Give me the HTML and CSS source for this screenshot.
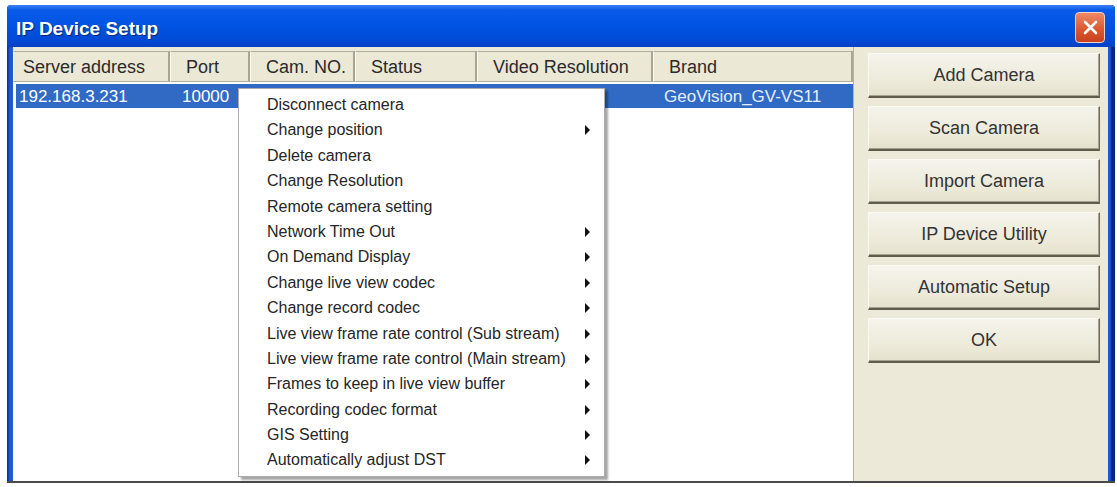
FILE: index.html
```html
<!DOCTYPE html>
<html lang="en">
<head>
    <meta charset="UTF-8">
    <title>IP Device Setup</title>
    <link rel="stylesheet" href="styles.css">
</head>
<body>
    <div class="window">
        <div class="titlebar">
            <span class="title">IP Device Setup</span>
            <div class="close">
                <svg width="17" height="17" viewBox="0 0 17 17">
                    <path d="M3 3 L14 14 M14 3 L3 14" stroke="#fff" stroke-width="2.6" stroke-linecap="round"/>
                </svg>
            </div>
        </div>

        <div class="client">
            <div class="list">
                <div class="header">
                    <div class="col c-addr">Server address</div>
                    <div class="col c-port">Port</div>
                    <div class="col c-cam">Cam. NO.</div>
                    <div class="col c-status">Status</div>
                    <div class="col c-res">Video Resolution</div>
                    <div class="col c-brand">Brand</div>
                </div>
                <div class="row selected">
                    <div class="cell c-addr">192.168.3.231</div>
                    <div class="cell c-port">10000</div>
                    <div class="cell c-cam"></div>
                    <div class="cell c-status"></div>
                    <div class="cell c-res"></div>
                    <div class="cell c-brand">GeoVision_GV-VS11</div>
                </div>

                <!-- right-click menu on the camera row -->
                <ul class="menu">
                    <li>Disconnect camera</li>
                    <li class="sub">Change position</li>
                    <li>Delete camera</li>
                    <li>Change Resolution</li>
                    <li>Remote camera setting</li>
                    <li class="sub">Network Time Out</li>
                    <li class="sub">On Demand Display</li>
                    <li class="sub">Change live view codec</li>
                    <li class="sub">Change record codec</li>
                    <li class="sub">Live view frame rate control (Sub stream)</li>
                    <li class="sub">Live view frame rate control (Main stream)</li>
                    <li class="sub">Frames to keep in live view buffer</li>
                    <li class="sub">Recording codec format</li>
                    <li class="sub">GIS Setting</li>
                    <li class="sub">Automatically adjust DST</li>
                </ul>
            </div>

            <div class="side">
                <button class="btn">Add Camera</button>
                <button class="btn">Scan Camera</button>
                <button class="btn">Import Camera</button>
                <button class="btn">IP Device Utility</button>
                <button class="btn">Automatic Setup</button>
                <button class="btn">OK</button>
            </div>
        </div>
    </div>
</body>
</html>
```

FILE: styles.css
```css
body {
    margin: 0;
    background: #fff;
    font-family: "Liberation Sans", Arial, sans-serif;
}
.window {
    margin: 5px 0 0 7px;
    width: 1108px;
    height: 478px;
    box-sizing: border-box;
    background: linear-gradient(to right, #0a2a8e 0, #1f5ad6 3px, #1f5ad6 1103px, #0a2488 1105px);
    border-bottom: 2px solid #4a4a4a;
    border-radius: 4px 4px 0 0;
    display: flex;
    flex-direction: column;
}
.titlebar {
    height: 42px;
    display: flex;
    align-items: center;
    justify-content: space-between;
    padding: 0 10px 0 9px;
    background: linear-gradient(to bottom, #3b82f5 0, #0a5ae8 5px, #0054e3 20px, #0049d4 36px, #0640c4 42px);
    border-radius: 4px 4px 0 0;
}
.title {
    color: #fff;
    font-weight: bold;
    font-size: 19px;
    text-shadow: 1px 1px 1px #0a2a7a;
    margin-top: 6px;
}
.close {
    width: 28px;
    height: 29px;
    margin-top: 2px;
    border: 1px solid #f1d2c8;
    border-radius: 4px;
    background: linear-gradient(to bottom, #ec8a66, #d9562e 60%, #c7421c);
    display: flex;
    align-items: center;
    justify-content: center;
}
.client {
    flex: 1;
    display: flex;
    margin: 0 7px 0 6px;
    background: #ece9d8;
}
.list {
    width: 840px;
    margin-top: 4px;
    background: #fff;
    position: relative;
}
.header {
    display: flex;
    height: 31px;
    background: #ebe8d6;
    font-size: 18px;
    color: #2a2a2a;
}
.col {
    box-sizing: border-box;
    border: 1px solid #b3af9c;
    border-left-color: #fbfaf4;
    border-right: 2px solid #a9a590;
    padding-left: 15px;
    line-height: 31px;
    white-space: nowrap;
}
.header .c-addr { padding-left: 9px; }
.c-addr { width: 157px; }
.c-port { width: 80px; }
.c-cam { width: 105px; }
.c-status { width: 122px; }
.c-res { width: 176px; }
.c-brand { width: 200px; }
.row {
    display: flex;
    height: 24px;
    margin: 2px 0 0 3px;
    font-size: 17px;
    line-height: 25px;
}
.row.selected {
    background: #316ac5;
    color: #fff;
}
.cell {
    white-space: nowrap;
}
.row .c-addr { width: 154px; padding-left: 3px; box-sizing: border-box; }
.row .c-port { padding-left: 12px; box-sizing: border-box; }
.row .c-brand { padding-left: 11px; box-sizing: border-box; color: #e6efff; }
.menu {
    position: absolute;
    left: 225px;
    top: 37px;
    width: 367px;
    box-sizing: border-box;
    margin: 0;
    padding: 3px 0;
    list-style: none;
    background: #fff;
    border: 1px solid #acacac;
    box-shadow: 3px 3px 2px rgba(0, 0, 0, 0.35);
    font-size: 16px;
    color: #262626;
}
.menu li {
    position: relative;
    height: 25.4px;
    line-height: 25px;
    padding-left: 28px;
    white-space: nowrap;
}
.menu li.sub::after {
    content: "";
    position: absolute;
    right: 14px;
    top: 8px;
    border-style: solid;
    border-width: 5px 0 5px 5px;
    border-color: transparent transparent transparent #111;
}
.side {
    flex: 1;
    display: flex;
    flex-direction: column;
    gap: 8px;
    padding: 6px 8px 0 14px;
    border-left: 1px solid #b8b4a2;
}
.btn {
    height: 45px;
    font-family: "Liberation Sans", Arial, sans-serif;
    font-size: 18px;
    color: #333;
    background: linear-gradient(to bottom, #f5f4ec, #ece9d8 70%, #e3e0cd);
    border: 1px solid;
    border-color: #fbfaf2 #6e6b5c #5f5c4e #fbfaf2;
    box-shadow: inset -1px -1px 0 #a6a28f;
    border-bottom-width: 2px;
    padding: 0;
}
```
